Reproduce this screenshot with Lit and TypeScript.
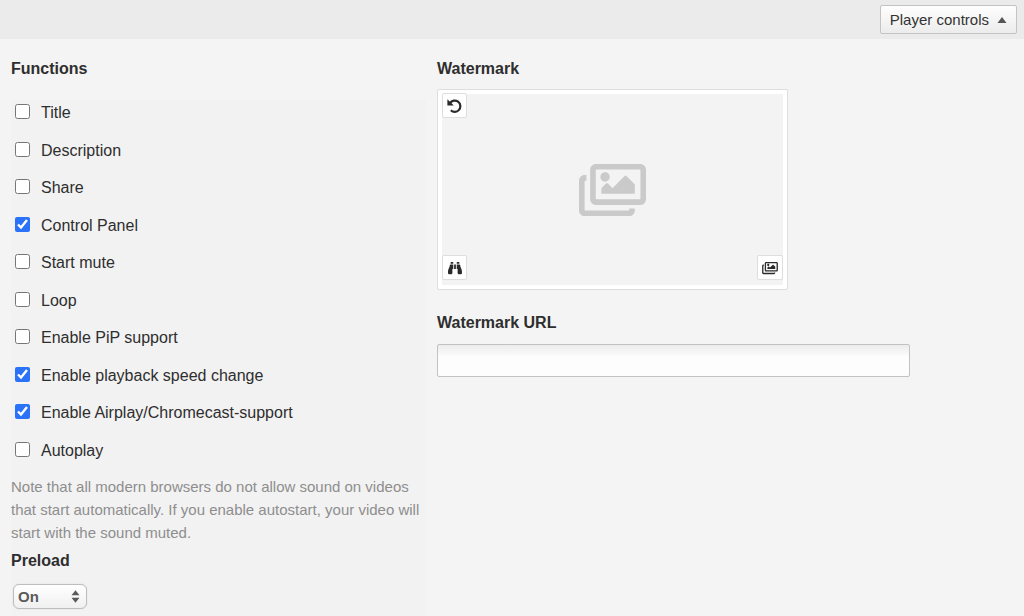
import { LitElement, html, css, svg } from "lit";
import { customElement, state } from "lit/decorators.js";

const imagesPath = svg`<path d="M480 416v16c0 26.51-21.49 48-48 48H48c-26.51 0-48-21.49-48-48V176c0-26.51 21.49-48 48-48h16v48H54a6 6 0 0 0-6 6v244a6 6 0 0 0 6 6h372a6 6 0 0 0 6-6v-10h48zm42-336H150a6 6 0 0 0-6 6v244a6 6 0 0 0 6 6h372a6 6 0 0 0 6-6V86a6 6 0 0 0-6-6zm6-48c26.51 0 48 21.49 48 48v256c0 26.51-21.49 48-48 48H144c-26.51 0-48-21.49-48-48V80c0-26.51 21.49-48 48-48h384zM264 144c0 22.091-17.909 40-40 40s-40-17.909-40-40 17.909-40 40-40 40 17.909 40 40zm-72 96l39.515-39.515c4.686-4.686 12.284-4.686 16.971 0L288 240l103.515-103.515c4.686-4.686 12.284-4.686 16.971 0L480 208v80H192v-48z"/>`;

const binocularsPath = svg`<path d="M416 48c0-8.84-7.16-16-16-16h-64c-8.84 0-16 7.16-16 16v48h96V48zM63.91 159.99C61.4 253.84 3.46 274.22 0 404v44c0 17.67 14.33 32 32 32h96c17.67 0 32-14.33 32-32V288h32V128H95.84c-17.63 0-31.45 14.37-31.93 31.99zm384.18 0c-.48-17.62-14.3-31.99-31.93-31.99H320v160h32v160c0 17.67 14.33 32 32 32h96c17.67 0 32-14.33 32-32v-44c-3.46-129.78-61.4-150.16-63.91-244.01zM176 32h-64c-8.84 0-16 7.16-16 16v48h96V48c0-8.84-7.16-16-16-16zm48 256h64V128h-64v160z"/>`;

interface Option {
  id: string;
  label: string;
  on: boolean;
}

@customElement("watermark-picker")
export class WatermarkPicker extends LitElement {
  static styles = css`
    :host {
      display: block;
    }
    .frame {
      position: relative;
      display: flex;
      align-items: center;
      justify-content: center;
      box-sizing: border-box;
      width: 100%;
      max-width: 351px;
      aspect-ratio: 351 / 201;
      background: #f3f3f3;
      border: 1px solid #dedede;
      border-radius: 2px;
      box-shadow: inset 0 0 0 4px #fff;
    }
    .placeholder {
      width: 67px;
      height: 60px;
      fill: #cacaca;
    }
    .tool {
      position: absolute;
      display: flex;
      align-items: center;
      justify-content: center;
      box-sizing: border-box;
      width: 25px;
      height: 25px;
      padding: 0;
      background: #fff;
      border: 1px solid #dedede;
      border-radius: 2px;
      color: #2b2b2b;
      fill: currentColor;
    }
    .reset {
      top: 3px;
      left: 4px;
    }
    .browse {
      bottom: 9px;
      left: 4px;
    }
    .library {
      bottom: 9px;
      right: 4px;
      width: 26px;
    }
    .glyph {
      display: block;
      height: 14px;
    }
  `;

  render() {
    return html`
      <div class="frame">
        <svg class="placeholder" viewBox="0 0 576 512" aria-hidden="true">${imagesPath}</svg>
        <button class="tool reset" type="button" aria-label="Reset watermark">
          <svg class="glyph" width="15" viewBox="0 0 15 14">
            <path d="M3 4.2A5.6 5.6 0 1 1 3.8 11.2" fill="none" stroke="currentColor" stroke-width="2.2" />
            <path d="M0.4 0.2L6.8 6.6H0.4Z" />
          </svg>
        </button>
        <button class="tool browse" type="button" aria-label="Browse">
          <svg class="glyph" width="14" viewBox="0 0 512 512">${binocularsPath}</svg>
        </button>
        <button class="tool library" type="button" aria-label="Choose image">
          <svg class="glyph" width="16" viewBox="0 0 576 512">${imagesPath}</svg>
        </button>
      </div>
    `;
  }
}

@customElement("app-root")
export class AppRoot extends LitElement {
  static styles = css`
    :host {
      display: flex;
      flex-direction: column;
      min-height: 100vh;
      background: #f4f4f4;
      color: #2e2e2e;
      font-family: "Liberation Sans", Arial, sans-serif;
      font-size: 16px;
      line-height: 23px;
    }
    .bar {
      display: flex;
      justify-content: flex-end;
      padding: 5px 7px 5px 11px;
      background: #ebebeb;
    }
    .toggle {
      display: flex;
      align-items: center;
      gap: 8px;
      box-sizing: border-box;
      height: 29px;
      padding: 0 9px;
      font: inherit;
      font-size: 15px;
      color: #333;
      background: linear-gradient(#fefefe, #ececec);
      border: 1px solid #c3c3c3;
      border-radius: 2px;
    }
    .columns {
      flex: 1;
      display: grid;
      grid-template-columns: minmax(0, 415fr) minmax(0, 577fr);
      column-gap: 11px;
      padding: 18px 10px 0 11px;
    }
    .column {
      display: flex;
      flex-direction: column;
    }
    .heading {
      display: block;
      margin: 0;
      font-size: 16px;
      line-height: 23px;
      font-weight: bold;
    }
    .panel {
      flex: 1;
      margin-top: 20px;
      background: #f2f2f2;
    }
    .options {
      display: grid;
      grid-auto-rows: 1fr;
      min-height: 375px;
      margin: 0;
      padding: 0;
      list-style: none;
    }
    .option {
      display: flex;
      align-items: flex-start;
      gap: 11px;
      padding-left: 4px;
    }
    .option label {
      padding-top: 1px;
    }
    .check {
      width: 15px;
      height: 15px;
      margin: 4px 0 0;
      accent-color: #2a72f8;
    }
    .note {
      margin: 0;
      color: #8e8e8e;
      font-size: 15px;
    }
    .preload {
      padding-top: 5px;
    }
    .pick {
      position: relative;
      display: inline-block;
      margin: 12px 2px 0;
    }
    .select {
      display: block;
      appearance: none;
      box-sizing: border-box;
      width: 74px;
      height: 25px;
      padding: 0 20px 0 4px;
      font: bold 15px/23px "Liberation Sans", Arial, sans-serif;
      color: #5a5a5a;
      background: linear-gradient(#fff, #f0f0f0);
      border: 1px solid #bdbdbd;
      border-radius: 6px;
      box-shadow: 0 0 1px #bdbdbd;
    }
    .arrows {
      position: absolute;
      top: 6px;
      right: 7px;
      pointer-events: none;
      fill: #5a5a5a;
    }
    .picker {
      margin-top: 9px;
    }
    .url-label {
      margin-top: 21px;
    }
    .url {
      box-sizing: border-box;
      width: 100%;
      max-width: 473px;
      height: 33px;
      margin-top: 10px;
      padding: 0 8px;
      font: inherit;
      color: inherit;
      background: linear-gradient(#ececec, #fdfdfd 12px);
      border: 1px solid #c2c2c2;
      border-radius: 2px;
    }
  `;

  @state() private options: Option[] = [
    { id: "title", label: "Title", on: false },
    { id: "description", label: "Description", on: false },
    { id: "share", label: "Share", on: false },
    { id: "panel", label: "Control Panel", on: true },
    { id: "mute", label: "Start mute", on: false },
    { id: "loop", label: "Loop", on: false },
    { id: "pip", label: "Enable PiP support", on: false },
    { id: "speed", label: "Enable playback speed change", on: true },
    { id: "cast", label: "Enable Airplay/Chromecast-support", on: true },
    { id: "autoplay", label: "Autoplay", on: false },
  ];

  private flip(id: string) {
    this.options = this.options.map((o) => (o.id === id ? { ...o, on: !o.on } : o));
  }

  render() {
    return html`
      <header class="bar">
        <button class="toggle" type="button" aria-expanded="true">
          Player controls
          <svg width="10" height="7" viewBox="0 0 10 7" aria-hidden="true">
            <path d="M5 1L9.5 7H0.5Z" fill="#555" />
          </svg>
        </button>
      </header>
      <main class="columns">
        <section class="column">
          <h2 class="heading">Functions</h2>
          <div class="panel">
            <ul class="options">
              ${this.options.map(
                (o) => html`
                  <li class="option">
                    <input
                      class="check"
                      type="checkbox"
                      id=${o.id}
                      .checked=${o.on}
                      @change=${() => this.flip(o.id)}
                    />
                    <label for=${o.id}>${o.label}</label>
                  </li>
                `
              )}
            </ul>
            <p class="note">
              Note that all modern browsers do not allow sound on videos that start automatically. If
              you enable autostart, your video will start with the sound muted.
            </p>
            <div class="preload">
              <label class="heading" for="preload">Preload</label>
              <span class="pick">
                <select class="select" id="preload">
                  <option selected>On</option>
                  <option>Off</option>
                </select>
                <svg class="arrows" width="9" height="13" viewBox="0 0 9 13" aria-hidden="true">
                  <path d="M4.5 0.3L8.5 5.3H0.5ZM4.5 12.7L0.5 7.7H8.5Z" />
                </svg>
              </span>
            </div>
          </div>
        </section>
        <section class="column">
          <h2 class="heading">Watermark</h2>
          <watermark-picker class="picker"></watermark-picker>
          <label class="heading url-label" for="url">Watermark URL</label>
          <input class="url" id="url" type="text" />
        </section>
      </main>
    `;
  }
}
